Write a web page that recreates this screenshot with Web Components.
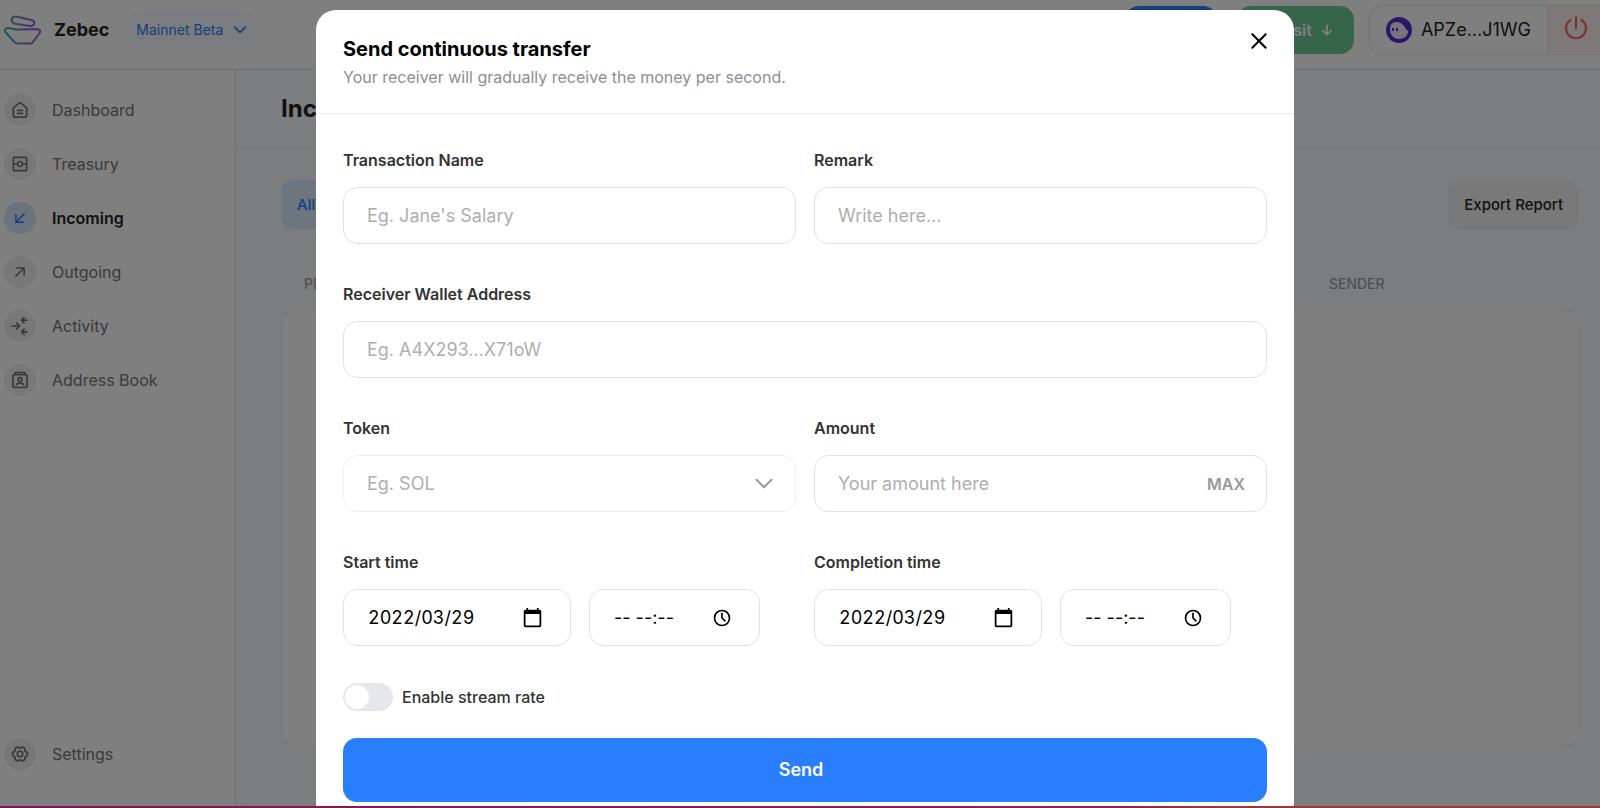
<!DOCTYPE html>
<html lang="en">
<head>
<meta charset="utf-8">
<title>Zebec - Incoming</title>
<style>
    html, body { height: 100%; }
    body {
        margin: 0;
        overflow: hidden;
        font-family: Inter, "Liberation Sans", sans-serif;
        font-size: 16px;
        line-height: 24px;
        color: #222;
        background: #fff;
    }
</style>
</head>
<body>
<zebec-app>
    <app-header slot="header"></app-header>
    <nav-list slot="nav">
        <nav-item icon="home">Dashboard</nav-item>
        <nav-item icon="safe">Treasury</nav-item>
        <nav-item icon="in" active>Incoming</nav-item>
        <nav-item icon="out">Outgoing</nav-item>
        <nav-item icon="activity">Activity</nav-item>
        <nav-item icon="book">Address Book</nav-item>
        <nav-item slot="bottom" icon="gear">Settings</nav-item>
    </nav-list>
    <incoming-page></incoming-page>
    <transfer-modal slot="modal" heading="Send continuous transfer" note="Your receiver will gradually receive the money per second.">
        <form-field label="Transaction Name" placeholder="Eg. Jane's Salary"></form-field>
        <form-field label="Remark" placeholder="Write here..."></form-field>
        <form-field label="Receiver Wallet Address" placeholder="Eg. A4X293...X71oW" wide></form-field>
        <select-field label="Token" placeholder="Eg. SOL"></select-field>
        <form-field label="Amount" placeholder="Your amount here" action="MAX"></form-field>
        <date-time-field label="Start time" date="2022/03/29" time="-- --:--"></date-time-field>
        <date-time-field label="Completion time" date="2022/03/29" time="-- --:--"></date-time-field>
        <toggle-switch slot="footer">Enable stream rate</toggle-switch>
    </transfer-modal>
</zebec-app>

<script>
const ICONS = {
    home: '<path d="M4 9.5 10.5 4a2.3 2.3 0 0 1 3 0L20 9.5V18a2.5 2.5 0 0 1-2.5 2.5h-11A2.5 2.5 0 0 1 4 18z"/><path d="M9 12.5h6M9 16h6"/>',
    safe: '<rect x="4" y="4" width="16" height="16" rx="1.5"/><circle cx="12" cy="12" r="3"/><path d="M4 12h5M15 12h5"/>',
    in: '<path d="M17.5 6.5 7 17M6.5 7.5v10h10"/>',
    out: '<path d="M6.5 17.5 17 7M7.5 6.5h10v10"/>',
    activity: '<path d="M2.5 12H11M8 8.5l3.5 3.5L8 15.5M20.5 5H14M17 1.8 13.8 5 17 8.2M20.5 19H14M17 15.8 13.8 19l3.2 3.2"/>',
    book: '<rect x="3.5" y="5.5" width="17" height="15.500" rx="2"/><path d="M5 5.500 6.500 3h11L19 5.500M7.500 18c.5-3 8.500-3 9 0"/><circle cx="12" cy="11.500" r="2.300"/>',
    gear: '<path d="M9.300 3.500 12 5l2.700-1.500 3 1.700.2 3.200 2.900 1.700v3.800l-2.900 1.700-.2 3.200-3 1.700L12 19l-2.700 1.500-3-1.700-.2-3.200-2.900-1.700v-3.800l2.900-1.700.2-3.200z"/><circle cx="12" cy="12" r="3.300"/>',
    chevron: '<path d="m3 7 9 9 9-9"/>',
    down: '<path d="M12 4v16M5 13l7 7 7-7"/>',
    close: '<path d="M4 4l16 16M20 4 4 20"/>',
    power: '<path d="M12 1v11.500M6.500 3.800a10 10 0 1 0 11 0"/>',
    calendar: '<path fill="currentColor" stroke="none" d="M20 3h-1V1h-2v2H7V1H5v2H4a2 2 0 0 0-2 2v16c0 1.100.9 2 2 2h16a2 2 0 0 0 2-2V5a2 2 0 0 0-2-2zm0 18H4V8h16z"/>',
    clock: '<circle cx="12" cy="12" r="9"/><path d="M12 6.500V12l3.500 3.500"/>'
};

const icon = (name, size, stroke = 2) => `
    <svg width="${size}" height="${size}" viewBox="0 0 24 24" fill="none" stroke="currentColor"
        stroke-width="${stroke}" stroke-linecap="round" stroke-linejoin="round" aria-hidden="true">${ICONS[name]}</svg>`;

const BASE = `
    :host, * { box-sizing: border-box; }
    button, input, select { font: inherit; color: inherit; margin: 0; }
    button { border: 0; padding: 0; background: none; cursor: pointer; }
    svg { display: block; flex: none; }
`;

// shared look of every form control
const FIELD = `
    :host { display: block; min-width: 0; }
    label { display: block; margin-bottom: 15px; font-weight: 600; color: #333; }
    .box {
        display: flex;
        align-items: center;
        height: 57px;
        padding: 0 21px 0 23px;
        border: 1px solid #e0e2e4;
        border-radius: 14px;
        background: #fff;
    }
    input, select {
        flex: 1;
        min-width: 0;
        width: 100%;
        padding: 0;
        border: 0;
        outline: 0;
        background: none;
        font-size: 18px;
    }
    ::placeholder { color: #aeaeae; opacity: 1; }
`;

class BaseElement extends HTMLElement {
    constructor () {
        super();
        this.attachShadow({ mode: 'open' });
    }

    connectedCallback () {
        this.shadowRoot.innerHTML = `<style>${BASE}</style>${this.template()}`;
    }

    attr (name) {
        return this.getAttribute(name) || '';
    }
}

class ZebecApp extends BaseElement {
    template () {
        return `
        <style>
            :host { display: flex; flex-direction: column; height: 100vh; }
            .body { flex: 1; display: flex; min-height: 0; }
            main { flex: 1; min-width: 0; background: #f8fafd; }
            .scrim {
                position: absolute;
                inset: 0;
                display: flex;
                justify-content: center;
                align-items: flex-start;
                padding: 10px 0 0 10px;
                background: rgba(0, 0, 0, 0.5);
                overflow: hidden;
            }
            .strip {
                position: absolute;
                inset: auto 0 0;
                height: 2px;
                background: linear-gradient(90deg, #7c1a4e, #8e2244 70%, #973a3a 76%);
            }
        </style>
        <slot name="header"></slot>
        <div class="body">
            <slot name="nav"></slot>
            <main><slot></slot></main>
        </div>
        <div class="scrim"><slot name="modal"></slot></div>
        <div class="strip"></div>`;
    }
}

class AppHeader extends BaseElement {
    template () {
        return `
        <style>
            :host {
                display: flex;
                flex: none;
                align-items: flex-start;
                justify-content: space-between;
                height: 70px;
                padding: 5px 0 0 4px;
                border-bottom: 1px solid #dcdfe3;
            }
            .left, .right, .brand, .network, .deposit, .account { display: flex; align-items: center; }
            .left { height: 50px; }
            .brand { gap: 13px; color: inherit; text-decoration: none; font-size: 18px; font-weight: 700; }
            .network { gap: 10px; height: 36px; margin-left: 19px; padding: 0 9px 0 8px; border-radius: 10px; background: #f5f9ff; color: #287efc; font-size: 14px; }
            .send { width: 92px; height: 48px; border-radius: 14px; background: #287efc; }
            .deposit { gap: 8px; height: 48px; margin: 0 15px 0 20px; padding: 0 20px 0 16px; border-radius: 14px; background: #6fcb97; color: #fff; font-weight: 600; }
            .wallet { display: flex; height: 50px; border: 1px solid #e6e6e8; border-right: 0; border-radius: 14px 0 0 14px; overflow: hidden; }
            .account { gap: 9px; padding: 0 16px; font-size: 18px; }
            .power { width: 53px; padding: 0 0 4px 16px; border-left: 1px solid #e6e6e8; background: #fff0f1; color: #f55f62; }
        </style>
        <div class="left">
            <a class="brand" href="#">
                <svg width="37" height="30" viewBox="0 0 37 30" fill="none" stroke="url(#g)" stroke-width="2" stroke-linejoin="round" stroke-linecap="round" aria-hidden="true">
                    <defs><linearGradient id="g" x1="0" y1="0" x2="37" y2="0" gradientUnits="userSpaceOnUse"><stop stop-color="#2bb89b"/><stop offset=".6" stop-color="#8a70c8"/><stop offset="1" stop-color="#a060cc"/></linearGradient></defs>
                    <path d="M12 1.500C7.500 1.500 6 5.500 9.500 8c1 .7 2 .8 3 1l13.500 2c2 .2 3.500-.5 4.200-2 .8-2-.2-3.300-2.700-4z"/>
                    <path d="M4 13c3.500 0 7 1.700 12 1.600L32.500 14c3.500 0 4.500 2.500 2.800 4.500L29 27c-.8 1.200-1.500 1.500-2.800 1.500H13.500c-1.500 0-2.300-.5-3.300-1.600L1.800 17.500C0 15.300 1.200 13 4 13z"/>
                </svg>
                Zebec
            </a>
            <button class="network" type="button">Mainnet Beta ${icon('chevron', 14, 3)}</button>
        </div>
        <div class="right">
            <button class="send" type="button" aria-label="Send"></button>
            <button class="deposit" type="button">Deposit ${icon('down', 14, 3)}</button>
            <div class="wallet">
                <button class="account" type="button">
                    <svg width="26" height="26" viewBox="0 0 26 26" aria-hidden="true">
                        <circle cx="13" cy="13" r="13" fill="#4e30d4"/>
                        <path d="M4 12a6 6 0 0 1 6-7c3 0 6 1 8 4 1.500 2 2 3.500 3.500 4.500.8.500.8 1 .4 2.500A8.600 8.600 0 0 1 13 22c-5 0-9-4-9-10z" fill="#eee9fa"/>
                        <path d="M6 11h2v3H6zM10 11h2v3h-2z" fill="#4e30d4"/>
                    </svg>
                    APZe...J1WG
                </button>
                <button class="power" type="button" aria-label="Disconnect wallet">${icon('power', 24, 2)}</button>
            </div>
        </div>`;
    }
}

class NavList extends BaseElement {
    template () {
        return `
        <style>
            :host { display: block; flex: none; width: 236px; border-right: 1px solid #dcdfe3; background: #fff; }
            nav { display: flex; flex-direction: column; gap: 22px; height: 100%; padding: 24px 4px 38px; }
            .bottom { margin-top: auto; }
        </style>
        <nav>
            <slot></slot>
            <div class="bottom"><slot name="bottom"></slot></div>
        </nav>`;
    }
}

class NavItem extends BaseElement {
    template () {
        return `
        <style>
            :host { display: block; }
            a { display: flex; align-items: center; gap: 16px; color: #747474; text-decoration: none; }
            .circle { display: grid; place-items: center; width: 32px; height: 32px; border-radius: 50%; background: #f1f1f1; }
            :host([active]) a { color: #222; font-weight: 600; }
            :host([active]) .circle { background: #d6e6ff; color: #287efc; }
        </style>
        <a href="#">
            <span class="circle">${icon(this.attr('icon'), /^(in|out)$/.test(this.attr('icon')) ? 18 : 20)}</span>
            <slot></slot>
        </a>`;
    }
}

class IncomingPage extends BaseElement {
    template () {
        return `
        <style>
            :host { display: flex; flex-direction: column; height: 100%; }
            h1 { margin: 0; padding: 24px 45px 23px; border-bottom: 1px solid #e8ebee; font-size: 24px; line-height: 30px; font-weight: 700; }
            .content { display: flex; flex-direction: column; flex: 1; padding: 32px 21px 62px 45px; }
            .bar { display: flex; justify-content: space-between; }
            .tab, .export { height: 49px; padding: 0 16px; border-radius: 12px; font-size: 15px; font-weight: 500; }
            .tab { background: #dbeaff; color: #287efc; }
            .export { background: #f3f3f3; }
            table { width: 100%; margin-top: 43px; border-collapse: collapse; }
            th { padding: 0 23px 14px; text-align: left; font-size: 14px; line-height: 24px; font-weight: 400; color: #999; }
            th:last-child { width: 273px; }
            .card { flex: 1; border: 1px solid #ecece9; border-radius: 14px; background: #fff; }
        </style>
        <h1>Incoming</h1>
        <div class="content">
            <div class="bar">
                <button class="tab" type="button">All</button>
                <button class="export" type="button">Export Report</button>
            </div>
            <table><thead><tr><th>PLAN</th><th>SENDER</th></tr></thead></table>
            <div class="card"></div>
        </div>`;
    }
}

class TransferModal extends BaseElement {
    template () {
        return `
        <style>
            :host { display: block; width: 978px; max-width: 100%; border-radius: 20px; background: #fff; }
            header { display: flex; justify-content: space-between; align-items: flex-start; padding: 21px 25px 24px 27px; border-bottom: 1px solid #ececec; }
            h2 { margin: 5px 0 3px; font-size: 20px; line-height: 26px; font-weight: 700; color: #000; }
            p { margin: 0; line-height: 24px; color: #8e8e8e; }
            .close { color: #000; }
            form { padding: 34px 27px 20px; }
            .grid { display: grid; grid-template-columns: 1fr 1fr; gap: 38px 18px; }
            ::slotted([wide]) { grid-column: 1 / -1; }
            .footer { margin: 37px 0 27px; }
            .submit { width: 100%; height: 64px; padding-right: 8px; border-radius: 14px; background: #287efc; color: #fff; font-size: 18px; font-weight: 600; }
        </style>
        <section role="dialog" aria-label="${this.attr('heading')}">
            <header>
                <div>
                    <h2>${this.attr('heading')}</h2>
                    <p>${this.attr('note')}</p>
                </div>
                <button class="close" type="button" aria-label="Close">${icon('close', 20, 2.5)}</button>
            </header>
            <form>
                <div class="grid"><slot></slot></div>
                <div class="footer"><slot name="footer"></slot></div>
                <button class="submit" type="button">Send</button>
            </form>
        </section>`;
    }
}

class FormField extends BaseElement {
    template () {
        const action = this.attr('action');
        return `
        <style>
            ${FIELD}
            button { font-weight: 600; color: #999; }
        </style>
        <label for="control">${this.attr('label')}</label>
        <div class="box">
            <input id="control" type="text" placeholder="${this.attr('placeholder')}">
            ${action ? `<button type="button">${action}</button>` : ''}
        </div>`;
    }
}

class SelectField extends BaseElement {
    template () {
        return `
        <style>
            ${FIELD}
            .box { border-color: #eeefef; }
            select { appearance: none; color: #aeaeae; }
            svg { color: #999; pointer-events: none; }
        </style>
        <label for="control">${this.attr('label')}</label>
        <div class="box">
            <select id="control"><option>${this.attr('placeholder')}</option></select>
            ${icon('chevron', 20, 2.5)}
        </div>`;
    }
}

class DateTimeField extends BaseElement {
    template () {
        const label = this.attr('label');
        return `
        <style>
            ${FIELD}
            .row { display: flex; gap: 18px; }
            .box { padding: 0 27px 0 24px; color: #000; }
            .date { width: 228px; font-variant-numeric: tabular-nums; }
            .date input { font-variant-numeric: inherit; }
            .time { width: 171px; }
        </style>
        <label for="date">${label}</label>
        <div class="row">
            <div class="box date">
                <input id="date" type="text" value="${this.attr('date')}">
                <button type="button" aria-label="Pick date">${icon('calendar', 21)}</button>
            </div>
            <div class="box time">
                <input type="text" aria-label="${label}, hour and minute" value="${this.attr('time')}">
                <button type="button" aria-label="Pick time">${icon('clock', 20)}</button>
            </div>
        </div>`;
    }
}

class ToggleSwitch extends BaseElement {
    template () {
        return `
        <style>
            :host { display: flex; }
            label { display: flex; align-items: center; gap: 9px; height: 28px; font-weight: 500; color: #333; }
            input { appearance: none; width: 50px; height: 28px; padding: 2px; border-radius: 14px; background: #e5e7eb; }
            input::before { content: ""; display: block; width: 24px; height: 24px; border-radius: 50%; background: #fff; }
            input:checked { background: #287efc; }
            input:checked::before { margin-left: 22px; }
        </style>
        <label><input type="checkbox" role="switch"><slot></slot></label>`;
    }
}

customElements.define('zebec-app', ZebecApp);
customElements.define('app-header', AppHeader);
customElements.define('nav-list', NavList);
customElements.define('nav-item', NavItem);
customElements.define('incoming-page', IncomingPage);
customElements.define('transfer-modal', TransferModal);
customElements.define('form-field', FormField);
customElements.define('select-field', SelectField);
customElements.define('date-time-field', DateTimeField);
customElements.define('toggle-switch', ToggleSwitch);
</script>
</body>
</html>
